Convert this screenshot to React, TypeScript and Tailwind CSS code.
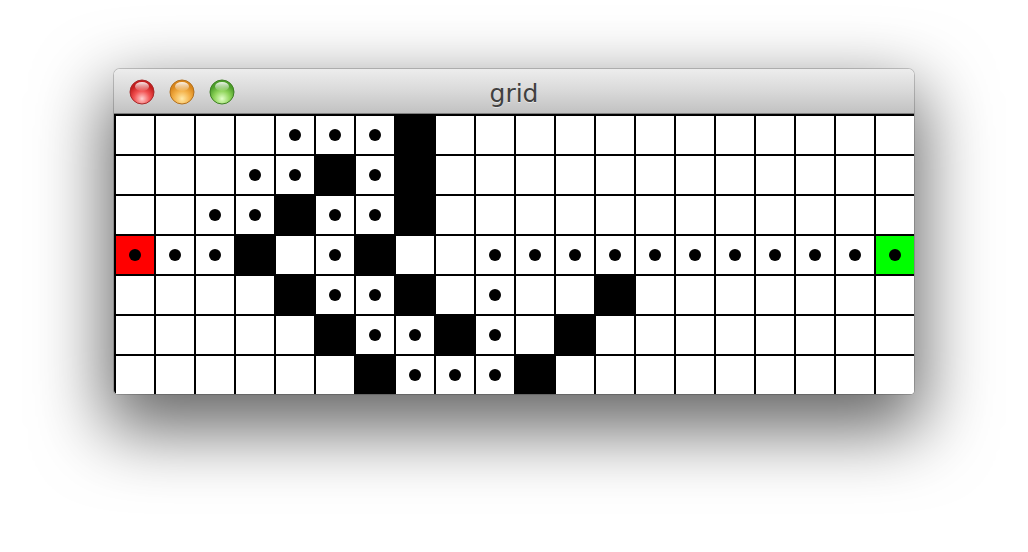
import React from "react";

type Cell = "e" | "d" | "b" | "r" | "g";

const defs: string[] = [
  "....ooo#............",
  "...oo#o#............",
  "..oo#oo#............",
  "Roo#.o#..ooooooooooG",
  "....#oo#.o..#.......",
  ".....#oo#o.#........",
  "......#ooo#.........",
];

function parse(ch: string): Cell {
  if (ch === "o") return "d";
  if (ch === "#") return "b";
  if (ch === "R") return "r";
  if (ch === "G") return "g";
  return "e";
}

function Light({ c1, c2, c3, stroke }: { c1: string; c2: string; c3: string; stroke: string }) {
  const id = c1.replace("#", "");
  return (
    <svg width="26" height="26" viewBox="0 0 26 26">
      <defs>
        <radialGradient id={"g" + id} cx="50%" cy="78%" r="60%">
          <stop offset="0%" stopColor={c1} />
          <stop offset="55%" stopColor={c2} />
          <stop offset="100%" stopColor={c3} />
        </radialGradient>
        <linearGradient id={"h" + id} x1="0" y1="0" x2="0" y2="1">
          <stop offset="0%" stopColor="#ffffff" stopOpacity="0.9" />
          <stop offset="100%" stopColor="#ffffff" stopOpacity="0.05" />
        </linearGradient>
      </defs>
      <circle cx="13" cy="13" r="12" fill={"url(#g" + id + ")"} stroke={stroke} strokeWidth="1" />
      <ellipse cx="13" cy="7.5" rx="7" ry="4.5" fill={"url(#h" + id + ")"} />
    </svg>
  );
}

export default function App() {
  const grid: Cell[] = [];
  defs.forEach((r) => {
    for (const ch of r) grid.push(parse(ch));
  });

  return (
    <div
      className="w-[1028px] h-[552px] bg-white pl-[114px] pt-[69px]"
      style={{ fontFamily: '"DejaVu Sans", "Liberation Sans", sans-serif' }}
    >
      <div className="w-[800px] rounded-t-[6px] rounded-b-[4px] overflow-hidden shadow-[0_28px_70px_8px_rgba(0,0,0,0.6),0_0_0_1px_rgba(0,0,0,0.18)]">
        <div className="relative h-[45px] bg-gradient-to-b from-[#ededed] via-[#d9d9d9] to-[#c2c2c2] border-b border-[#7d7d7d] flex items-center">
          <div className="absolute left-[15px] top-[10px] flex gap-[14px]">
            <Light c1="#ffd0d0" c2="#f25252" c3="#c41d1d" stroke="#a52a2a" />
            <Light c1="#ffe9a8" c2="#f4b24a" c3="#d9861b" stroke="#b07020" />
            <Light c1="#e2ffc8" c2="#8fd45a" c3="#4d9f2a" stroke="#3f7f25" />
          </div>
          <div className="w-full text-center text-[25px] leading-none text-[#404040] pt-[4px] [text-shadow:0_1px_0_rgba(255,255,255,0.5)]">
            grid
          </div>
        </div>
        <div className="grid grid-cols-[repeat(20,40px)] bg-white">
          {grid.map((c, i) => (
            <div
              key={i}
              className={
                "h-[40px] border-l-2 border-t-2 border-black flex items-center justify-center " +
                (c === "b" ? "bg-black" : c === "r" ? "bg-[#ff0000]" : c === "g" ? "bg-[#00ff00]" : "bg-white")
              }
            >
              {(c === "d" || c === "r" || c === "g") && (
                <div className="w-[12px] h-[12px] rounded-full bg-black" />
              )}
            </div>
          ))}
        </div>
      </div>
    </div>
  );
}
